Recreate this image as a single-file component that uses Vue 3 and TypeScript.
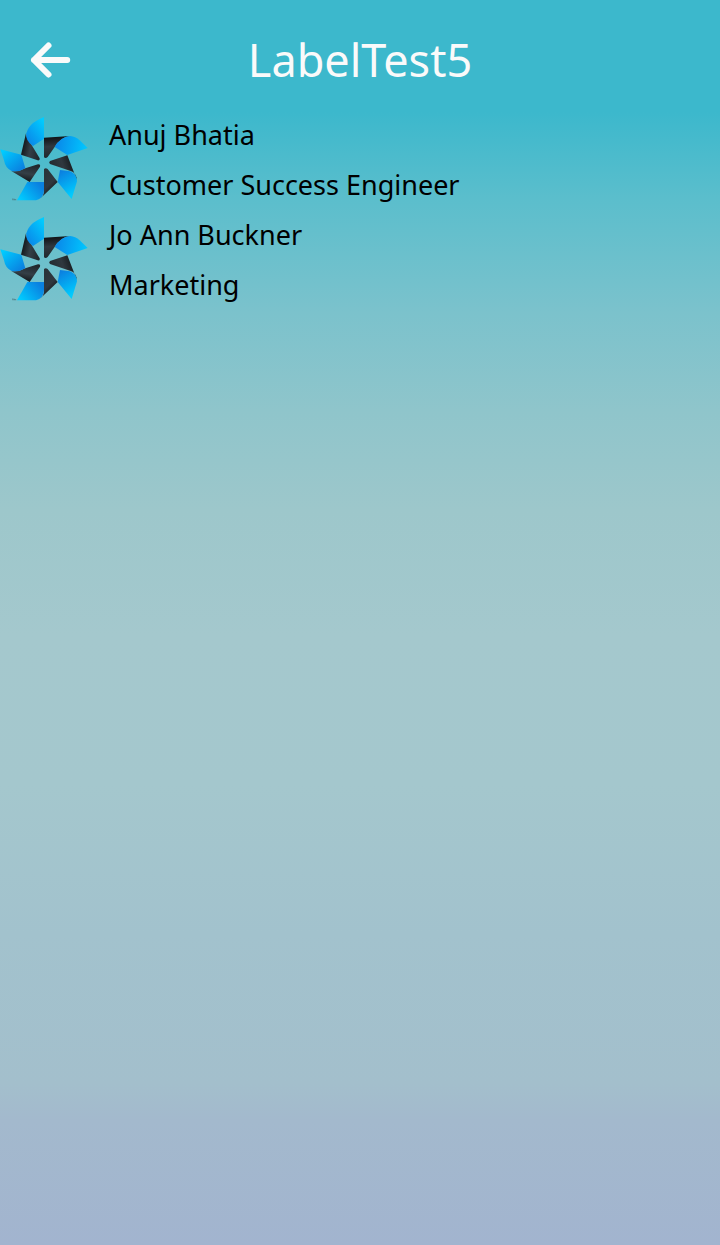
<script setup lang="ts">
interface Person {
  name: string
  role: string
}

const title = 'LabelTest5'
const people: Person[] = [
  { name: 'Anuj Bhatia', role: 'Customer Success Engineer' },
  { name: 'Jo Ann Buckner', role: 'Marketing' },
]
</script>

<template>
  <div class="page">
    <header class="bar">
      <button class="back" type="button" aria-label="Back">
        <svg viewBox="0 0 60 60" width="60" height="60" aria-hidden="true">
          <path d="M28.500 15.500L14 30L28.500 44.500M14 30H47.200" />
        </svg>
      </button>
      <h1 class="title">{{ title }}</h1>
    </header>

    <svg class="defs" width="0" height="0" aria-hidden="true">
      <defs>
        <linearGradient id="blue-a" x1="1" y1="0" x2="0.2" y2="1">
          <stop offset="0.1" stop-color="#00ccff" />
          <stop offset="1" stop-color="#0a86e8" />
        </linearGradient>
        <linearGradient id="blue-b" x1="1" y1="0.5" x2="0" y2="0.4">
          <stop offset="0" stop-color="#00c8ff" />
          <stop offset="1" stop-color="#0a86e8" />
        </linearGradient>
        <linearGradient id="blue-c" x1="0.7" y1="1" x2="0.3" y2="0">
          <stop offset="0.1" stop-color="#00ccff" />
          <stop offset="1" stop-color="#0a80e0" />
        </linearGradient>
        <linearGradient id="blue-d" x1="0" y1="1" x2="1" y2="0.4">
          <stop offset="0.1" stop-color="#00ccff" />
          <stop offset="1" stop-color="#0a80e0" />
        </linearGradient>
        <linearGradient id="blue-e" x1="0" y1="0" x2="0.9" y2="0.9">
          <stop offset="0.1" stop-color="#00ccff" />
          <stop offset="1" stop-color="#0a80e0" />
        </linearGradient>
        <linearGradient id="dark-a" x1="0" y1="0.4" x2="1" y2="0.7">
          <stop offset="0" stop-color="#0c0f12" />
          <stop offset="0.5" stop-color="#343f47" />
          <stop offset="1" stop-color="#20272c" />
        </linearGradient>
        <linearGradient id="dark-b" x1="0.4" y1="0" x2="0.5" y2="1">
          <stop offset="0" stop-color="#0c0f12" />
          <stop offset="0.45" stop-color="#30383f" />
          <stop offset="1" stop-color="#20272c" />
        </linearGradient>
        <linearGradient id="dark-c" x1="1" y1="0.3" x2="0" y2="0.6">
          <stop offset="0" stop-color="#0c0f12" />
          <stop offset="0.5" stop-color="#30383f" />
          <stop offset="1" stop-color="#20272c" />
        </linearGradient>
        <linearGradient id="dark-d" x1="0.7" y1="0.9" x2="0.3" y2="0.2">
          <stop offset="0" stop-color="#0c0f12" />
          <stop offset="0.5" stop-color="#30383f" />
          <stop offset="1" stop-color="#2b343a" />
        </linearGradient>
        <linearGradient id="dark-e" x1="0.3" y1="1" x2="0.6" y2="0">
          <stop offset="0" stop-color="#0c0f12" />
          <stop offset="0.5" stop-color="#343f47" />
          <stop offset="1" stop-color="#20272c" />
        </linearGradient>
        <symbol id="pinwheel" viewBox="0 0 300 300">
          <path fill="url(#dark-a)" d="M78 70Q79 86 88 94L119 145Q121 152 113 151L63 134Z" />
          <path fill="url(#blue-a)" d="M132 21V86L99 108Q76 94 79 70Q84 52 99 39Q113 29 132 21Z" />
          <path fill="url(#dark-b)" d="M132 83L211 78Q182 81 164 111L143 141Q137 147 132 142Z" />
          <path fill="url(#blue-b)" d="M164 111Q180 81 211 78Q226 79 239 91L263 114L202 135Z" />
          <path fill="url(#dark-c)" d="M202 136L231 211Q228 187 212 183L150 162Q145 157 150 153Z" />
          <path fill="url(#blue-c)" d="M180 180L210 184Q229 190 231 214L215 267L173 216Z" />
          <path fill="url(#dark-d)" d="M132 177Q137 172 143 177L173 216L120 266Q132 260 132 240Z" />
          <path fill="url(#blue-d)" d="M82 216H132V240Q131 265 108 271H51Z" />
          <path fill="url(#dark-e)" d="M34 183Q54 187 76 175L114 163Q122 162 120 170L89 216Z" />
          <path fill="url(#blue-e)" d="M1 118L64 134L76 175Q57 187 35 183Q16 175 12 151Z" />
          <path fill="none" stroke="#48777f" stroke-width="2" d="M36 267H41M39 267V271M43 271V267L45 269L47 267V271" />
        </symbol>
      </defs>
    </svg>

    <ul class="list">
      <li v-for="person in people" :key="person.name" class="item">
        <svg class="logo" aria-hidden="true"><use href="#pinwheel" /></svg>
        <div class="text">
          <span class="line">{{ person.name }}</span>
          <span class="line">{{ person.role }}</span>
        </div>
      </li>
    </ul>
  </div>
</template>

<style>
body {
  margin: 0;
}
</style>

<style scoped>
.page {
  min-height: 100vh;
  font-family: 'Noto Sans', 'Open Sans', sans-serif;
  color: #000;
  background: linear-gradient(
    180deg,
    #3cb8cc 0%,
    #3cb8cc 9%,
    #5bbecc 16%,
    #7bc2cc 25%,
    #8fc5cb 33%,
    #9dc7cb 41%,
    #a4c8cd 51%,
    #a4c7cd 63%,
    #a2c2cd 75%,
    #a3bfcc 87%,
    #a3b9cd 90%,
    #a2b4cf 100%
  );
}

.bar {
  display: grid;
  grid-template-columns: 60px 1fr 60px;
  align-items: center;
  height: 110px;
  padding: 10px 20px 0;
  box-sizing: border-box;
}

.back {
  display: block;
  width: 60px;
  height: 60px;
  padding: 0;
  border: 0;
  background: none;
  cursor: pointer;
}

.back svg {
  display: block;
  fill: none;
  stroke: #fafafa;
  stroke-width: 6;
  stroke-linecap: round;
  stroke-linejoin: round;
}

.title {
  margin: 0;
  font-size: 45px;
  font-weight: 400;
  line-height: 60px;
  text-align: center;
  color: #fafafa;
}

.defs {
  position: absolute;
}

.list {
  margin: 0;
  padding: 0;
  list-style: none;
}

.item {
  display: flex;
  gap: 9px;
}

.logo {
  flex: none;
  width: 100px;
  height: 100px;
}

.text {
  display: flex;
  flex-direction: column;
  min-width: 0;
}

.line {
  font-size: 27px;
  line-height: 50px;
}
</style>
